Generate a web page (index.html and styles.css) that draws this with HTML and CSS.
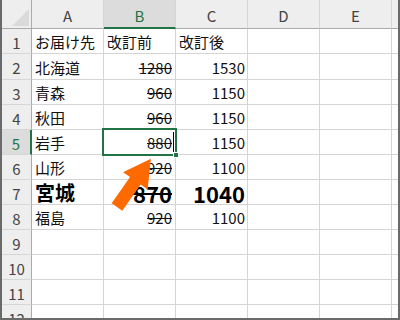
FILE: index.html
```html
<!DOCTYPE html>
<html>

<head>
    <meta charset="UTF-8">
    <title>改訂前後</title>
    <link rel="stylesheet" href="styles.css">
</head>

<body>
    <div class="frame">
        <div class="sheet">
            <!-- header row -->
            <div class="corner"><span class="tri"></span></div>
            <div class="hd">A</div>
            <div class="hd on">B</div>
            <div class="hd">C</div>
            <div class="hd">D</div>
            <div class="hd">E</div>
            <div class="hd rest"></div>

            <div class="rh">1</div>
            <div class="c">お届け先</div>
            <div class="c">改訂前</div>
            <div class="c">改訂後</div>
            <div class="c"></div>
            <div class="c"></div>
            <div class="c rest"></div>

            <div class="rh">2</div>
            <div class="c">北海道</div>
            <div class="c num old">1280</div>
            <div class="c num">1530</div>
            <div class="c"></div>
            <div class="c"></div>
            <div class="c rest"></div>

            <div class="rh">3</div>
            <div class="c">青森</div>
            <div class="c num old">960</div>
            <div class="c num">1150</div>
            <div class="c"></div>
            <div class="c"></div>
            <div class="c rest"></div>

            <div class="rh">4</div>
            <div class="c">秋田</div>
            <div class="c num old">960</div>
            <div class="c num">1150</div>
            <div class="c"></div>
            <div class="c"></div>
            <div class="c rest"></div>

            <div class="rh on">5</div>
            <div class="c">岩手</div>
            <div class="c num old active">880<span class="caret"></span><div class="sel"></div></div>
            <div class="c num">1150</div>
            <div class="c"></div>
            <div class="c"></div>
            <div class="c rest"></div>

            <div class="rh">6</div>
            <div class="c">山形</div>
            <div class="c num old">920</div>
            <div class="c num">1100</div>
            <div class="c"></div>
            <div class="c"></div>
            <div class="c rest"></div>

            <div class="rh">7</div>
            <div class="c big">宮城</div>
            <div class="c num old big">870</div>
            <div class="c num big">1040</div>
            <div class="c"></div>
            <div class="c"></div>
            <div class="c rest"></div>

            <div class="rh">8</div>
            <div class="c">福島</div>
            <div class="c num old">920</div>
            <div class="c num">1100</div>
            <div class="c"></div>
            <div class="c"></div>
            <div class="c rest"></div>

            <div class="rh">9</div>
            <div class="c"></div>
            <div class="c"></div>
            <div class="c"></div>
            <div class="c"></div>
            <div class="c"></div>
            <div class="c rest"></div>

            <div class="rh">10</div>
            <div class="c"></div>
            <div class="c"></div>
            <div class="c"></div>
            <div class="c"></div>
            <div class="c"></div>
            <div class="c rest"></div>

            <div class="rh">11</div>
            <div class="c"></div>
            <div class="c"></div>
            <div class="c"></div>
            <div class="c"></div>
            <div class="c"></div>
            <div class="c rest"></div>

            <div class="rh">12</div>
            <div class="c"></div>
            <div class="c"></div>
            <div class="c"></div>
            <div class="c"></div>
            <div class="c"></div>
            <div class="c rest"></div>
        </div>

        <!-- orange pointer arrow -->
        <svg class="arrow" width="400" height="320" viewBox="0 0 400 320">
            <polygon points="0,-6.5 32,-6.5 32,-15 59,0 32,15 32,6.5 0,6.5" fill="#ff6a00"
                transform="translate(117 207) rotate(-55)" />
        </svg>
    </div>
</body>

</html>
```

FILE: styles.css
```css
/* Page */
body {
    margin: 0;
    background: #fff;
    font-family: "Noto Sans CJK JP", "Liberation Sans", sans-serif;
}

.frame {
    position: relative;
    width: 400px;
    height: 320px;
    box-sizing: border-box;
    border-left: 2px solid #6a6a6a;
    border-right: 2px solid #6a6a6a;
    border-bottom: 2px solid #6a6a6a;
    overflow: hidden;
}

/* Grid */
.sheet {
    display: grid;
    grid-template-columns: 30px repeat(5, 72px) 1fr;
    grid-template-rows: 29px 25px 26px repeat(10, 25px);
}

.sheet > div {
    box-sizing: border-box;
    display: flex;
    align-items: center;
    min-width: 0;
}

/* Column and row headers */
.corner {
    background-color: #eeeeee;
    border-right: 1px solid #ababab;
    border-bottom: 1px solid #ababab;
    justify-content: flex-end;
    align-items: flex-end !important;
    padding: 0 2px 2px 0;
}

.tri {
    width: 17px;
    height: 17px;
    background-color: #dadada;
    clip-path: polygon(100% 0, 100% 100%, 0 100%);
}

.hd {
    background-color: #eeeeee;
    border-right: 1px solid #d6d6d6;
    border-bottom: 1px solid #ababab;
    justify-content: center;
    padding-top: 3px;
    color: #444;
    font-size: 15px;
}

.hd.on {
    background-color: #dcdcdc;
    color: #217346;
    border-bottom: 2px solid #217346;
}

.hd.rest {
    border-right: none;
}

.rh {
    background-color: #eeeeee;
    border-right: 1px solid #ababab;
    border-bottom: 1px solid #d6d6d6;
    justify-content: center;
    padding-top: 2px;
    color: #444;
    font-size: 15px;
}

.rh.on {
    background-color: #dcdcdc;
    color: #217346;
    border-right: 2px solid #217346;
}

/* Cells */
.c {
    border-right: 1px solid #d4d4d4;
    border-bottom: 1px solid #d4d4d4;
    padding: 1px 2px 0 3px;
    font-size: 15px;
    color: #111;
    white-space: nowrap;
}

.c.rest {
    border-right: none;
}

.num {
    justify-content: flex-end;
}

.old {
    text-decoration: line-through;
    padding-right: 3px;
}

.big {
    font-size: 20px;
    font-weight: bold;
    color: #000;
}

.num.big {
    font-size: 22px;
}

/* Active cell */
.active {
    position: relative;
    overflow: visible;
}

.caret {
    width: 1px;
    height: 21px;
    margin-left: 1px;
    margin-right: -2px;
    background-color: #000;
}

.sel {
    position: absolute;
    inset: -2px;
    border: 2px solid #217346;
}

.sel::after {
    content: "";
    position: absolute;
    right: -4px;
    bottom: -4px;
    width: 4px;
    height: 4px;
    background-color: #217346;
    border: 1px solid #fff;
}

/* Overlay arrow */
.arrow {
    position: absolute;
    top: 0;
    left: -2px;
    pointer-events: none;
}
```
